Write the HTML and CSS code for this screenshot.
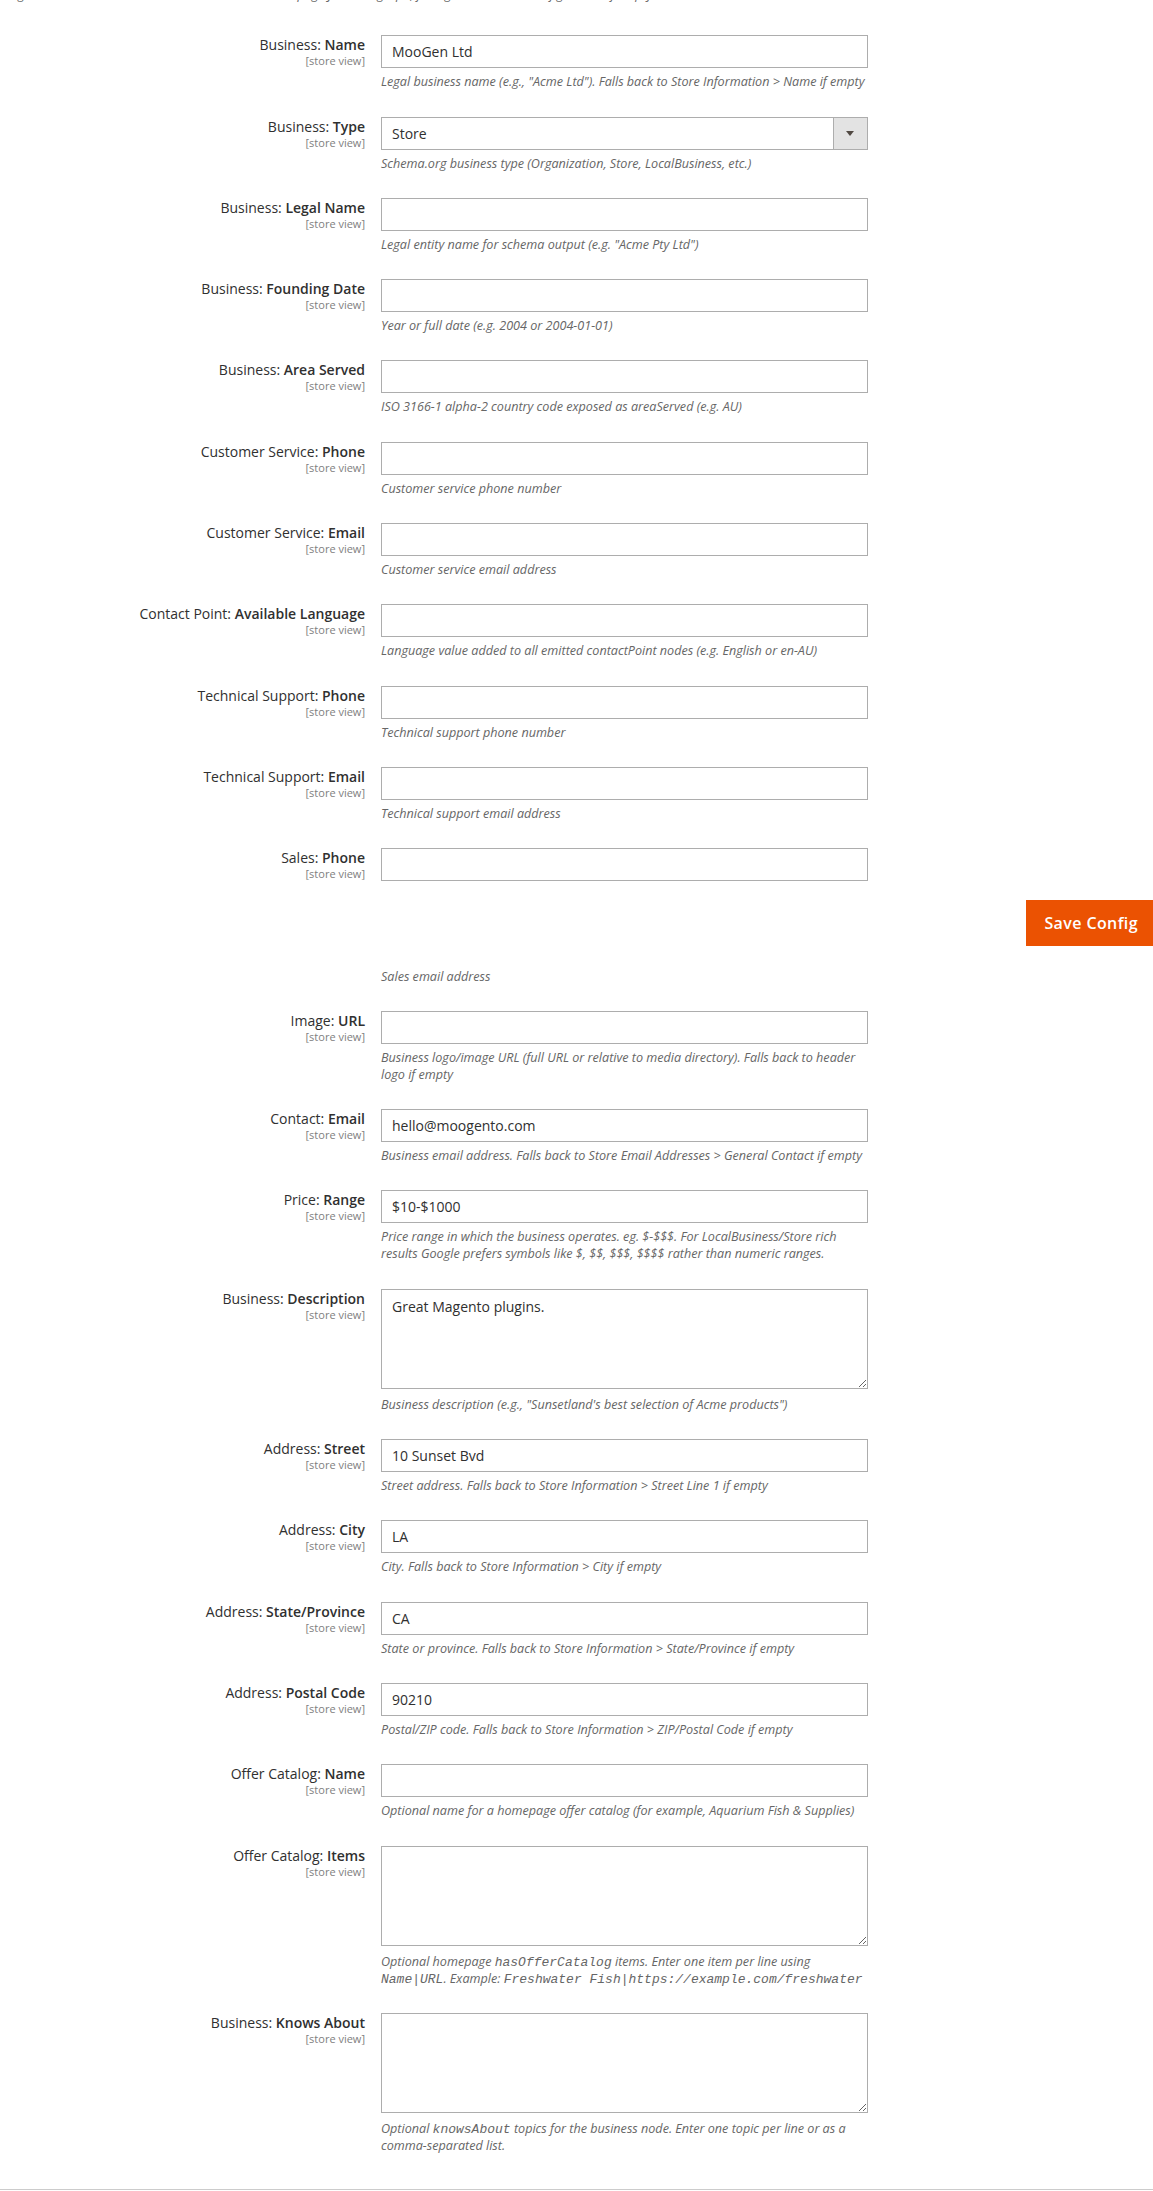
FILE: index.html
```html
<!DOCTYPE html>
<html lang="en">
<head>
    <meta charset="UTF-8">
    <meta name="viewport" content="width=device-width, initial-scale=1.0">
    <title>Organization Schema - Configuration</title>
    <link rel="stylesheet" href="styles.css">
</head>
<body>
    <div class="section">
        <p class="section-note">Organization structured data used to build the homepage JSON-LD graph, falling back to store configuration if empty</p>

        <div class="field">
            <label class="label" for="biz_name">Business: <strong>Name</strong><span class="scope">[store view]</span></label>
            <div class="value">
                <input class="text" type="text" id="biz_name" value="MooGen Ltd">
                <p class="note">Legal business name (e.g., "Acme Ltd"). Falls back to Store Information &gt; Name if empty</p>
            </div>
        </div>

        <div class="field">
            <label class="label" for="biz_type">Business: <strong>Type</strong><span class="scope">[store view]</span></label>
            <div class="value">
                <div class="select" id="biz_type">
                    <span class="select-value">Store</span>
                    <span class="select-arrow"></span>
                </div>
                <p class="note">Schema.org business type (Organization, Store, LocalBusiness, etc.)</p>
            </div>
        </div>

        <div class="field">
            <label class="label" for="legal_name">Business: <strong>Legal Name</strong><span class="scope">[store view]</span></label>
            <div class="value">
                <input class="text" type="text" id="legal_name">
                <p class="note">Legal entity name for schema output (e.g. "Acme Pty Ltd")</p>
            </div>
        </div>

        <div class="field">
            <label class="label" for="founding_date">Business: <strong>Founding Date</strong><span class="scope">[store view]</span></label>
            <div class="value">
                <input class="text" type="text" id="founding_date">
                <p class="note">Year or full date (e.g. 2004 or 2004-01-01)</p>
            </div>
        </div>

        <div class="field">
            <label class="label" for="area_served">Business: <strong>Area Served</strong><span class="scope">[store view]</span></label>
            <div class="value">
                <input class="text" type="text" id="area_served">
                <p class="note">ISO 3166-1 alpha-2 country code exposed as areaServed (e.g. AU)</p>
            </div>
        </div>

        <div class="field">
            <label class="label" for="cs_phone">Customer Service: <strong>Phone</strong><span class="scope">[store view]</span></label>
            <div class="value">
                <input class="text" type="text" id="cs_phone">
                <p class="note">Customer service phone number</p>
            </div>
        </div>

        <div class="field">
            <label class="label" for="cs_email">Customer Service: <strong>Email</strong><span class="scope">[store view]</span></label>
            <div class="value">
                <input class="text" type="text" id="cs_email">
                <p class="note">Customer service email address</p>
            </div>
        </div>

        <div class="field">
            <label class="label" for="cp_language">Contact Point: <strong>Available Language</strong><span class="scope">[store view]</span></label>
            <div class="value">
                <input class="text" type="text" id="cp_language">
                <p class="note">Language value added to all emitted contactPoint nodes (e.g. English or en-AU)</p>
            </div>
        </div>

        <div class="field">
            <label class="label" for="ts_phone">Technical Support: <strong>Phone</strong><span class="scope">[store view]</span></label>
            <div class="value">
                <input class="text" type="text" id="ts_phone">
                <p class="note">Technical support phone number</p>
            </div>
        </div>

        <div class="field">
            <label class="label" for="ts_email">Technical Support: <strong>Email</strong><span class="scope">[store view]</span></label>
            <div class="value">
                <input class="text" type="text" id="ts_email">
                <p class="note">Technical support email address</p>
            </div>
        </div>

        <div class="field">
            <label class="label" for="sales_phone">Sales: <strong>Phone</strong><span class="scope">[store view]</span></label>
            <div class="value">
                <input class="text" type="text" id="sales_phone">
                <p class="note">Sales phone number</p>
            </div>
        </div>

        <div class="field">
            <label class="label" for="sales_email">Sales: <strong>Email</strong><span class="scope">[store view]</span></label>
            <div class="value">
                <input class="text" type="text" id="sales_email">
                <p class="note">Sales email address</p>
            </div>
        </div>

        <div class="field">
            <label class="label" for="image_url">Image: <strong>URL</strong><span class="scope">[store view]</span></label>
            <div class="value">
                <input class="text" type="text" id="image_url">
                <p class="note">Business logo/image URL (full URL or relative to media directory). Falls back to header logo if empty</p>
            </div>
        </div>

        <div class="field">
            <label class="label" for="contact_email">Contact: <strong>Email</strong><span class="scope">[store view]</span></label>
            <div class="value">
                <input class="text" type="text" id="contact_email" value="hello@moogento.com">
                <p class="note">Business email address. Falls back to Store Email Addresses &gt; General Contact if empty</p>
            </div>
        </div>

        <div class="field">
            <label class="label" for="price_range">Price: <strong>Range</strong><span class="scope">[store view]</span></label>
            <div class="value">
                <input class="text" type="text" id="price_range" value="$10-$1000">
                <p class="note">Price range in which the business operates. eg. $-$$$. For LocalBusiness/Store rich results Google prefers symbols like $, $$, $$$, $$$$ rather than numeric ranges.</p>
            </div>
        </div>

        <div class="field">
            <label class="label" for="description">Business: <strong>Description</strong><span class="scope">[store view]</span></label>
            <div class="value">
                <textarea class="textarea" id="description">Great Magento plugins.</textarea>
                <p class="note">Business description (e.g., "Sunsetland's best selection of Acme products")</p>
            </div>
        </div>

        <div class="field">
            <label class="label" for="street">Address: <strong>Street</strong><span class="scope">[store view]</span></label>
            <div class="value">
                <input class="text" type="text" id="street" value="10 Sunset Bvd">
                <p class="note">Street address. Falls back to Store Information &gt; Street Line 1 if empty</p>
            </div>
        </div>

        <div class="field">
            <label class="label" for="city">Address: <strong>City</strong><span class="scope">[store view]</span></label>
            <div class="value">
                <input class="text" type="text" id="city" value="LA">
                <p class="note">City. Falls back to Store Information &gt; City if empty</p>
            </div>
        </div>

        <div class="field">
            <label class="label" for="region">Address: <strong>State/Province</strong><span class="scope">[store view]</span></label>
            <div class="value">
                <input class="text" type="text" id="region" value="CA">
                <p class="note">State or province. Falls back to Store Information &gt; State/Province if empty</p>
            </div>
        </div>

        <div class="field">
            <label class="label" for="postcode">Address: <strong>Postal Code</strong><span class="scope">[store view]</span></label>
            <div class="value">
                <input class="text" type="text" id="postcode" value="90210">
                <p class="note">Postal/ZIP code. Falls back to Store Information &gt; ZIP/Postal Code if empty</p>
            </div>
        </div>

        <div class="field">
            <label class="label" for="catalog_name">Offer Catalog: <strong>Name</strong><span class="scope">[store view]</span></label>
            <div class="value">
                <input class="text" type="text" id="catalog_name">
                <p class="note">Optional name for a homepage offer catalog (for example, Aquarium Fish &amp; Supplies)</p>
            </div>
        </div>

        <div class="field">
            <label class="label" for="catalog_items">Offer Catalog: <strong>Items</strong><span class="scope">[store view]</span></label>
            <div class="value">
                <textarea class="textarea" id="catalog_items"></textarea>
                <p class="note">Optional homepage <code>hasOfferCatalog</code> items. Enter one item per line using <code>Name|URL</code>. Example: <code>Freshwater Fish|https://example.com/freshwater</code></p>
            </div>
        </div>

        <div class="field">
            <label class="label" for="knows_about">Business: <strong>Knows About</strong><span class="scope">[store view]</span></label>
            <div class="value">
                <textarea class="textarea" id="knows_about"></textarea>
                <p class="note">Optional <code>knowsAbout</code> topics for the business node. Enter one topic per line or as a comma-separated list.</p>
            </div>
        </div>
    </div>

    
    <div class="page-actions">
        <button class="action-primary" type="button">Save Config</button>
    </div>
</body>
</html>
```

FILE: styles.css
```css
body {
    margin: 0;
    background-color: #ffffff;
    font-family: "Open Sans", "Liberation Sans", sans-serif;
    color: #303030;
    overflow-x: hidden;
}
.section {
    padding-bottom: 35px;
    border-bottom: 1px solid #cccccc;
}
.section-note {
    margin: -14px 0 6px 4px;
    font-size: 12.6px;
    line-height: 17px;
    font-style: italic;
    color: #666666;
}
.field {
    display: grid;
    grid-template-columns: 365px 487px;
    column-gap: 16px;
    padding-top: 26.3px;
}
.label {
    text-align: right;
    font-size: 14px;
    line-height: 19px;
    color: #303030;
}
.label strong {
    font-weight: 600;
}
.scope {
    display: block;
    font-size: 11px;
    line-height: 14px;
    color: #808080;
}
.text,
.textarea,
.select {
    display: block;
    width: 100%;
    box-sizing: border-box;
    margin: 0;
    border: 1px solid #adadad;
    border-radius: 0;
    background-color: #ffffff;
    font-family: "Open Sans", "Liberation Sans", sans-serif;
    font-size: 14px;
    color: #303030;
}
.text {
    height: 33px;
    padding: 0 10px;
    line-height: 19px;
}
.textarea {
    height: 100px;
    margin-bottom: 7px;
    padding: 7px 10px;
    line-height: 19px;
    resize: vertical;
}
.select {
    display: flex;
    height: 33px;
}
.select-value {
    flex: 1;
    padding: 0 10px;
    line-height: 31px;
}
.select-arrow {
    position: relative;
    width: 33px;
    background-color: #e3e3e3;
    border-left: 1px solid #adadad;
}
.select-arrow::after {
    content: "";
    position: absolute;
    left: 12px;
    top: 13px;
    border-left: 4px solid transparent;
    border-right: 4px solid transparent;
    border-top: 5px solid #514943;
}
.note {
    margin: 5px 0 0;
    font-size: 12.6px;
    line-height: 17px;
    font-style: italic;
    color: #666666;
}
.note code {
    font-family: "Liberation Mono", "DejaVu Sans Mono", monospace;
    font-size: 13px;
    line-height: 1;
}
.page-actions {
    position: absolute;
    left: 0;
    right: 0;
    top: 883px;
    height: 86px;
    background-color: #ffffff;
    display: flex;
    justify-content: flex-end;
    align-items: flex-start;
    padding-top: 17px;
    box-sizing: border-box;
    overflow: hidden;
}
.action-primary {
    height: 46px;
    margin-right: -3px;
    padding: 0 17px;
    background-color: #eb5202;
    border: 1px solid #eb5202;
    color: #ffffff;
    font-family: "Open Sans", "Liberation Sans", sans-serif;
    font-size: 16px;
    font-weight: 600;
    letter-spacing: 0.025em;
    cursor: pointer;
}
```
